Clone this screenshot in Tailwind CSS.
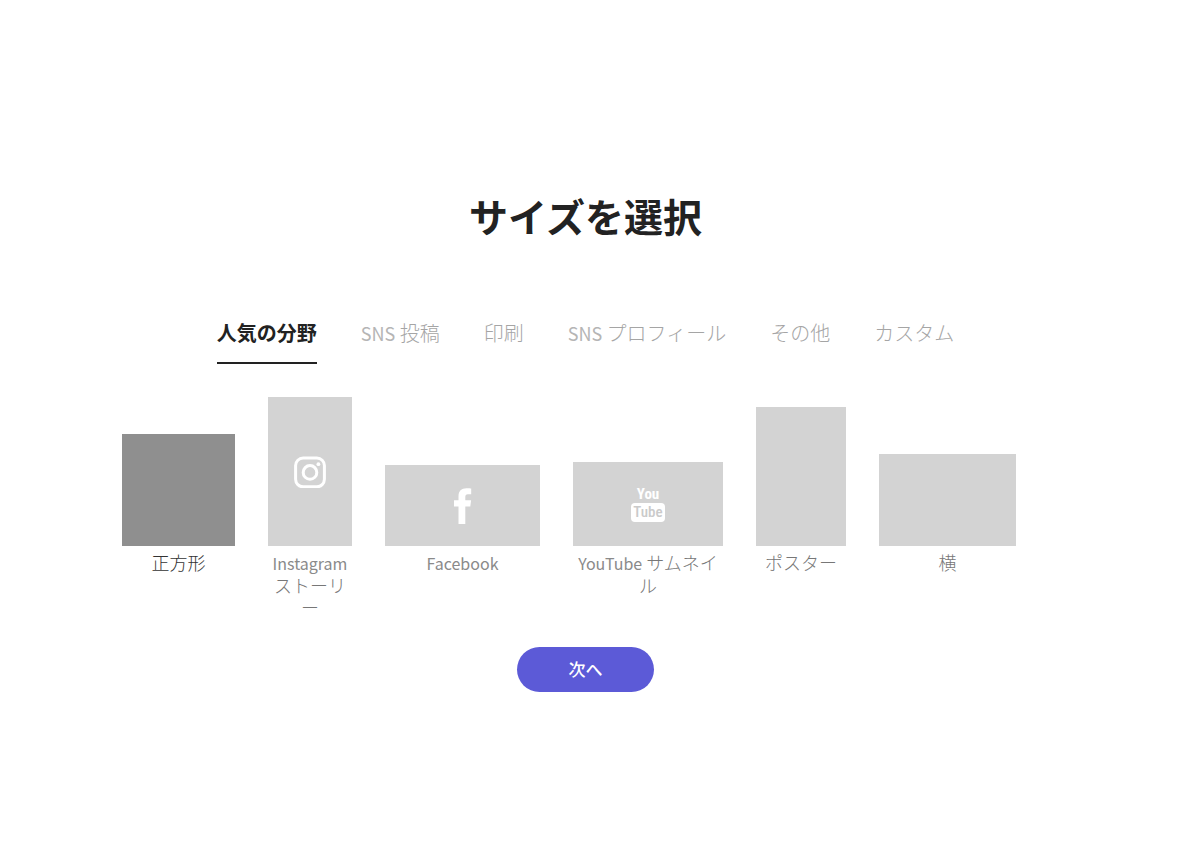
<!DOCTYPE html>
<html lang="ja">
<head>
<meta charset="utf-8">
<meta name="viewport" content="width=device-width, initial-scale=1">
<title>サイズを選択</title>
<script src="https://cdn.jsdelivr.net/npm/@tailwindcss/browser@4"></script>
</head>
<body class="min-h-screen bg-white font-['Noto_Sans_CJK_JP',sans-serif] text-[#222]">
<main class="flex flex-col items-center pt-[186px] pr-[29px] pb-12">
  <h1 class="text-[39px] leading-[58px] font-bold">サイズを選択</h1>

  <div role="tablist" aria-label="カテゴリ" class="mt-[74px] flex gap-11 text-[20px] leading-[30px] font-light whitespace-nowrap text-[#a5a5a5]">
    <button type="button" role="tab" aria-selected="true" class="border-b-2 border-[#222] pb-[14px] font-bold text-[#222]">人気の分野</button>
    <button type="button" role="tab" aria-selected="false" class="border-b-2 border-transparent pb-[14px]"><span class="text-[18px] font-normal text-[#b5b5b5]">SNS</span> 投稿</button>
    <button type="button" role="tab" aria-selected="false" class="border-b-2 border-transparent pb-[14px]">印刷</button>
    <button type="button" role="tab" aria-selected="false" class="border-b-2 border-transparent pb-[14px]"><span class="text-[18px] font-normal text-[#b5b5b5]">SNS</span> プロフィール</button>
    <button type="button" role="tab" aria-selected="false" class="border-b-2 border-transparent pb-[14px]">その他</button>
    <button type="button" role="tab" aria-selected="false" class="border-b-2 border-transparent pb-[14px]">カスタム</button>
  </div>

  <div class="mt-[33px] flex items-start text-[18px] leading-[22px] font-light text-[#777]">
    <button type="button" aria-pressed="true" class="mr-[33px] w-[113px] text-[#333]">
      <span class="flex h-[149px] items-end"><span class="h-28 w-full bg-[#8f8f8f]"></span></span>
      <span class="mt-[5px] block break-all">正方形</span>
    </button>
    <button type="button" class="mr-[33px] w-[84px]">
      <span class="flex h-[149px] items-end">
        <span class="flex h-[149px] w-full items-center justify-center bg-[#d3d3d3]">
          <svg class="size-8" viewBox="0 0 32 32" fill="none" stroke="#fff" stroke-width="3" aria-hidden="true"><rect x="1.6" y="2" width="28.8" height="28.8" rx="7.5"/><circle cx="16" cy="16.4" r="6.8"/><circle cx="24.4" cy="8.2" r="1.9" fill="#fff" stroke="none"/></svg>
        </span>
      </span>
      <span class="mt-[5px] block break-all [line-break:anywhere]"><span class="text-[16px] font-normal text-[#8a8a8a]">Instagram</span> ストーリー</span>
    </button>
    <button type="button" class="mr-[33px] w-[155px]">
      <span class="flex h-[149px] items-end">
        <span class="flex h-[81px] w-full items-center justify-center bg-[#d3d3d3]">
          <svg class="h-9 w-[18px]" viewBox="0 0 18 36" fill="#fff" aria-hidden="true"><path d="M4.5 36V18.5H0V12.3h4.5V8.2C4.5 3 7.3.2 12.5.2c2.2 0 4.1.2 4.7.3v5.8h-3.2c-2.2 0-2.7 1.1-2.7 2.8v3.2h5.8l-.8 6.2h-5V36z"/></svg>
        </span>
      </span>
      <span class="mt-[5px] block break-all"><span class="text-[16px] font-normal text-[#8a8a8a]">Facebook</span></span>
    </button>
    <button type="button" class="mr-[33px] w-[150px]">
      <span class="flex h-[149px] items-end">
        <span class="flex h-21 w-full flex-col items-center justify-center bg-[#d3d3d3] font-['Liberation_Sans_Narrow','Roboto_Condensed','DejaVu_Sans_Condensed',sans-serif] text-[15px]">
          <span class="leading-[17px] font-bold text-white">You</span>
          <span class="h-[19px] w-[34px] rounded-[4px] bg-white text-[15px] leading-[19px] font-medium text-[#cacaca]">Tube</span>
        </span>
      </span>
      <span class="mt-[5px] block break-all"><span class="text-[16px] font-normal text-[#8a8a8a]">YouTube</span> サムネイル</span>
    </button>
    <button type="button" class="mr-[33px] w-[90px]">
      <span class="flex h-[149px] items-end"><span class="h-[139px] w-full bg-[#d3d3d3]"></span></span>
      <span class="mt-[5px] block break-all">ポスター</span>
    </button>
    <button type="button" class="mr-[33px] w-[137px]">
      <span class="flex h-[149px] items-end"><span class="h-[92px] w-full bg-[#d3d3d3]"></span></span>
      <span class="mt-[5px] block break-all">横</span>
    </button>
  </div>

  <button type="button" class="mt-[29px] h-[45px] w-[137px] rounded-full bg-[#5c5ad7] pb-[2px] text-[17px] leading-6 font-medium text-white">次へ</button>
</main>
</body>
</html>
